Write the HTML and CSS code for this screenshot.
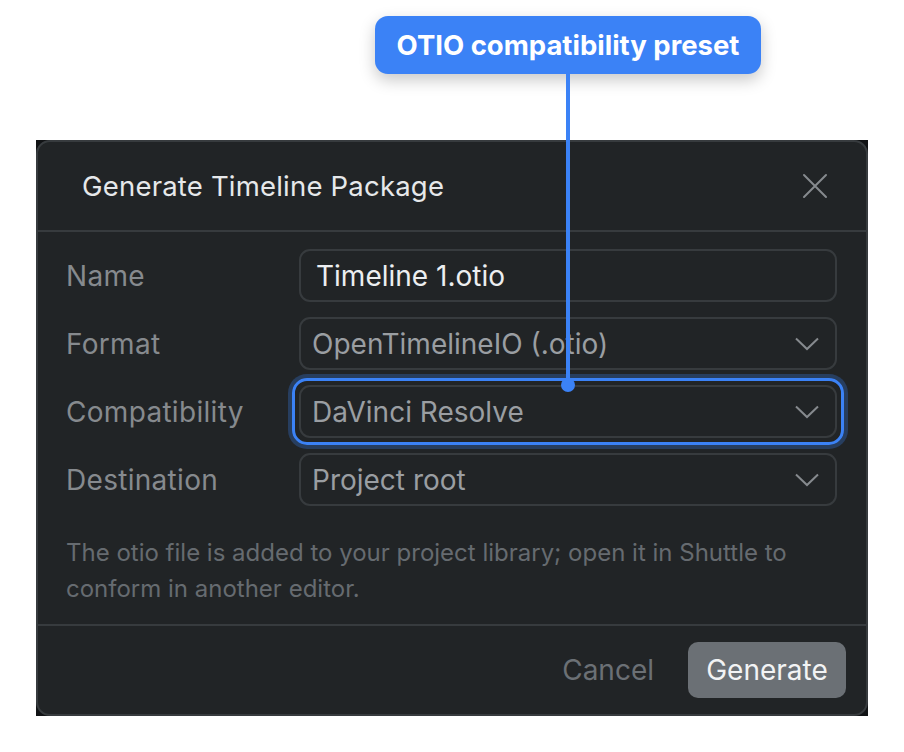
FILE: index.html
```html
<!DOCTYPE html>
<html lang="en">
<head>
<meta charset="utf-8">
<title>Generate Timeline Package</title>
<link rel="stylesheet" href="styles.css">
</head>
<body>
<div class="stage">
  <div class="backdrop">
    <div class="dialog">
      <div class="header">
        <h1 class="title">Generate Timeline Package</h1>
        <svg class="close" width="26" height="26" viewBox="0 0 26 26" aria-label="Close">
          <path d="M2 2 L24 24 M24 2 L2 24" stroke="#868a8e" stroke-width="2" fill="none" stroke-linecap="round"/>
        </svg>
      </div>
      <div class="body">
        <div class="form">
          <div class="label">Name</div>
          <div class="field input">Timeline 1.otio</div>
          <div class="label">Format</div>
          <div class="field select"><span>OpenTimelineIO (.otio)</span><svg class="chev" width="24" height="14" viewBox="0 0 24 14"><path d="M1 1.5 L12 12 L23 1.5" stroke="#868a8e" stroke-width="2" fill="none"/></svg></div>
          <div class="label">Compatibility</div>
          <div class="field select focused"><span>DaVinci Resolve</span><svg class="chev" width="24" height="14" viewBox="0 0 24 14"><path d="M1 1.5 L12 12 L23 1.5" stroke="#868a8e" stroke-width="2" fill="none"/></svg></div>
          <div class="label">Destination</div>
          <div class="field select"><span>Project root</span><svg class="chev" width="24" height="14" viewBox="0 0 24 14"><path d="M1 1.5 L12 12 L23 1.5" stroke="#868a8e" stroke-width="2" fill="none"/></svg></div>
        </div>
        <p class="help">The otio file is added to your project library; open it in Shuttle to conform in another editor.</p>
      </div>
      <div class="footer">
        <button class="btn-cancel">Cancel</button>
        <button class="btn-primary">Generate</button>
      </div>
    </div>
  </div>
  <div class="callout">OTIO compatibility preset</div>
  <div class="leader"></div>
  <div class="leader-dot"></div>
</div>
</body>
</html>
```
FILE: styles.css
```css
* { box-sizing: border-box; }
html, body { margin: 0; padding: 0; background: #ffffff; }
body { font-family: Inter, "Noto Sans", sans-serif; width: 904px; height: 752px; overflow: hidden; }

.stage { position: relative; width: 904px; height: 752px; padding: 140px 0 0 36px; }

.backdrop {
  width: 832px;
  height: 576px;
  background: #111315;
}
.dialog {
  width: 100%;
  height: 100%;
  background: #212426;
  border: 2px solid #373b3e;
  border-radius: 14px;
  display: flex;
  flex-direction: column;
}

.header {
  height: 90px;
  flex: none;
  display: flex;
  align-items: center;
  justify-content: space-between;
  padding: 0 38px 0 44px;
  border-bottom: 2px solid #373b3e;
}
.title {
  margin: 0;
  font-size: 27.5px;
  font-weight: 400;
  color: #e6e8ea;
  letter-spacing: 0.2px;
}
.close { display: block; }

.body {
  flex: 1;
  padding: 17px 29px 0 28px;
  border-bottom: 2px solid #373b3e;
}
.form {
  display: grid;
  grid-template-columns: 233px 1fr;
  row-gap: 15px;
  align-items: center;
}
.label {
  font-size: 28px;
  letter-spacing: 0.3px;
  color: #868a8e;
}
.field {
  position: relative;
  height: 53px;
  border: 2px solid #373b3e;
  border-radius: 11px;
  display: flex;
  align-items: center;
  font-size: 28px;
}
.input { padding-left: 15px; color: #eceef0; }
.select { padding: 0 16px 0 11px; justify-content: space-between; color: #9a9ea2; }
.chev { display: block; }
.focused::before {
  content: "";
  position: absolute;
  inset: -9px;
  border: 3px solid #3b82f6;
  border-radius: 15px;
  box-shadow: 0 0 0 4px rgba(59, 130, 246, 0.28);
}

.help {
  margin: 29px 0 0;
  font-size: 24px;
  line-height: 36px;
  color: #666b70;
}

.footer {
  flex: none;
  height: 88px;
  display: flex;
  align-items: center;
  justify-content: flex-end;
  gap: 34px;
  padding-right: 20px;
}
.btn-cancel {
  background: none;
  border: none;
  padding: 0;
  font-family: inherit;
  font-size: 28px;
  color: #6b7075;
}
.btn-primary {
  height: 56px;
  width: 158px;
  padding: 0;
  border: none;
  border-radius: 10px;
  background: #6b7075;
  color: #f2f3f4;
  font-family: inherit;
  font-size: 28px;
}

.callout {
  position: absolute;
  left: 375px;
  top: 16px;
  width: 386px;
  height: 58px;
  border-radius: 13px;
  background: #3b82f6;
  color: #ffffff;
  font-size: 27.5px;
  font-weight: 700;
  display: flex;
  align-items: center;
  justify-content: center;
  box-shadow: 0 6px 16px rgba(0, 0, 0, 0.22);
}
.leader {
  position: absolute;
  left: 566px;
  top: 74px;
  width: 4px;
  height: 311px;
  background: #3b82f6;
}
.leader-dot {
  position: absolute;
  left: 561px;
  top: 378px;
  width: 14px;
  height: 14px;
  border-radius: 50%;
  background: #3b82f6;
}
```
